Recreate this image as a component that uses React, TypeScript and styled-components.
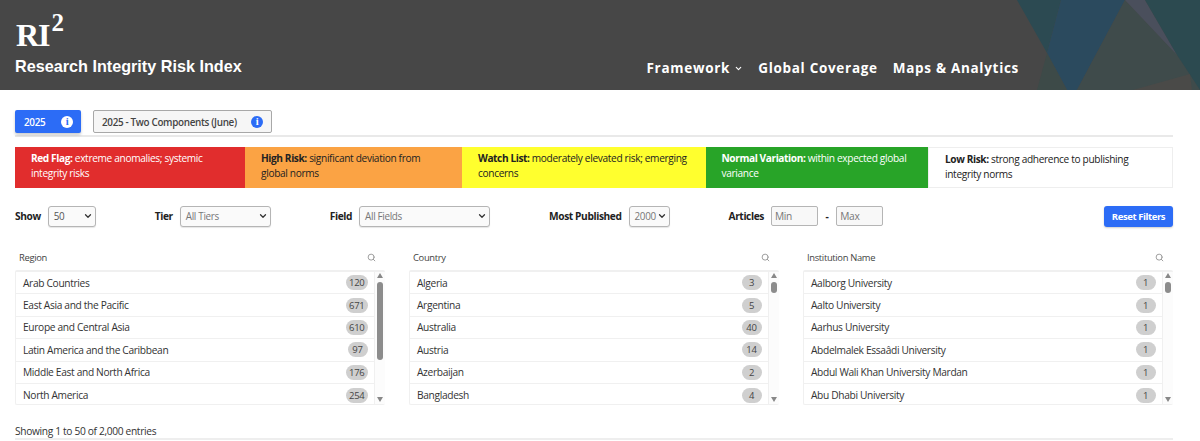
import React from "react";
import styled, { createGlobalStyle } from "styled-components";
import { ChevronDown, Search } from "lucide-react";

const GlobalStyle = createGlobalStyle`
  html, body { margin: 0; padding: 0; background: #fff; }
  body {
    font-family: "Open Sans", "Liberation Sans", sans-serif;
    color: #333;
    overflow: hidden;
  }
  * { box-sizing: border-box; }
`;

const Page = styled.div`
  width: 1200px;
  height: 441px;
  overflow: hidden;
`;

const Header = styled.header`
  position: relative;
  height: 90px;
  background: #474747;
  padding: 0 15px;
  display: flex;
  justify-content: space-between;
  overflow: hidden;
`;

const Decor = styled.svg`
  position: absolute;
  right: 0;
  top: 0;
`;

const Brand = styled.div`
  position: relative;
  color: #fff;
`;

const Logo = styled.div`
  font-family: "Liberation Serif", serif;
  font-weight: 700;
  font-size: 32px;
  letter-spacing: -1px;
  line-height: 38px;
  margin-top: 16px;
  height: 38px;
  padding-left: 1px;

  sup {
    font-size: 25px;
    line-height: 0;
    position: relative;
    top: -15px;
    vertical-align: baseline;
    margin-left: 2px;
  }
`;

const Tagline = styled.div`
  font-family: "Liberation Sans", sans-serif;
  font-weight: 700;
  font-size: 16.2px;
  line-height: 20px;
  margin-top: 2px;
`;

const Nav = styled.nav`
  position: relative;
  display: flex;
  gap: 15px;
  align-items: center;
  height: 28px;
  margin-top: 54px;
  margin-right: 166px;
`;

const NavItem = styled.a`
  display: inline-flex;
  align-items: center;
  gap: 4px;
  color: #fff;
  font-weight: 700;
  font-size: 13.5px;
  letter-spacing: 0.7px;
`;

const Content = styled.main`
  padding: 20px 27px 0 15px;
`;

const TabBar = styled.div`
  display: flex;
  gap: 12px;
  height: 27px;
  border-bottom: 2px solid #e9e9e9;
  align-items: flex-start;
`;

const Tab = styled.button<{ $active?: boolean }>`
  display: flex;
  align-items: center;
  justify-content: space-between;
  height: 23px;
  padding: 0 8px 0 ${(p) => (p.$active ? "9px" : "8px")};
  font-family: inherit;
  font-size: 9.9px;
  letter-spacing: -0.33px;
  font-weight: 600;
  border-radius: 2px;
  background: ${(p) => (p.$active ? "#2c6cf6" : "#f6f6f6")};
  color: ${(p) => (p.$active ? "#fff" : "#444")};
  border: ${(p) => (p.$active ? "none" : "1px solid #a8a8a8")};
  width: ${(p) => (p.$active ? "66px" : "179px")};
  box-shadow: ${(p) => (p.$active ? "0 2px 3px rgba(0,0,0,.2)" : "none")};
`;

const InfoDot = styled.span<{ $inverse?: boolean }>`
  width: 12px;
  height: 12px;
  border-radius: 50%;
  display: flex;
  align-items: center;
  justify-content: center;
  font-family: "Liberation Serif", serif;
  font-size: 10.5px;
  font-weight: 700;
  background: ${(p) => (p.$inverse ? "#fff" : "#2c6cf6")};
  color: ${(p) => (p.$inverse ? "#2c6cf6" : "#fff")};
`;

const RiskBar = styled.div`
  display: grid;
  grid-template-columns: 230px 217px 243.5px 222.5px 245px;
  height: 39px;
  margin-top: 9.5px;
`;

const RiskCell = styled.div<{ $bg: string; $fg: string; $outlined?: boolean }>`
  background: ${(p) => p.$bg};
  color: ${(p) => p.$fg};
  font-size: 10.15px;
  letter-spacing: -0.33px;
  line-height: 15.5px;
  padding: 4px 16px;
  border: ${(p) => (p.$outlined ? "1px solid #eee" : "none")};
  b { font-weight: 700; letter-spacing: -0.4px; }
`;

const Filters = styled.div`
  display: flex;
  align-items: center;
  height: 22px;
  margin-top: 19.5px;
`;

const FilterLabel = styled.label<{ $left: number }>`
  font-size: 10.2px;
  letter-spacing: -0.4px;
  font-weight: 700;
  color: #222;
  margin-left: ${(p) => p.$left}px;
  margin-right: 7px;
`;

const SelectBox = styled.div<{ $w: number; $dark?: boolean }>`
  width: ${(p) => p.$w}px;
  height: 21px;
  border: 1px solid #b5b5b5;
  border-radius: 3px;
  display: flex;
  align-items: center;
  justify-content: space-between;
  padding: 0 2px 0 5px;
  background: #fafafa;
  font-size: 9.9px;
  letter-spacing: -0.33px;
  color: ${(p) => (p.$dark ? "#555" : "#777")};
  box-shadow: 0 1px 1px rgba(0, 0, 0, 0.1);
`;

const NumInput = styled.div`
  width: 47px;
  height: 20px;
  border: 1px solid #b5b5b5;
  border-radius: 2px;
  background: #f8f8f8;
  font-size: 10.2px;
  letter-spacing: -0.33px;
  color: #777;
  padding: 0 3px;
  display: flex;
  align-items: center;
`;

const Dash = styled.span`
  font-size: 10.2px;
  font-weight: 700;
  margin: 0 7.5px;
  color: #222;
`;

const ResetButton = styled.button`
  margin-left: auto;
  width: 69px;
  height: 21px;
  background: #2c6cf6;
  border: none;
  border-radius: 3px;
  color: #fff;
  font-family: inherit;
  font-weight: 700;
  font-size: 9.5px;
  letter-spacing: -0.4px;
  padding: 0;
  box-shadow: 0 1px 2px rgba(0, 0, 0, 0.2);
`;

const Columns = styled.div`
  display: grid;
  grid-template-columns: repeat(3, 370px);
  gap: 24px;
  margin-top: 22px;
`;

const ColHead = styled.div`
  display: flex;
  justify-content: space-between;
  align-items: center;
  height: 16px;
  padding: 0 9px 0 4px;
  font-size: 9.4px;
  letter-spacing: -0.33px;
  color: #444;
  svg { color: #999; }
`;

const ListPanel = styled.div`
  display: flex;
  height: 135px;
  margin-top: 5px;
  border: 1px solid #f0f0f0;
  border-top-width: 2px;
  border-right: none;
  border-radius: 2px;
  overflow: hidden;
`;

const Rows = styled.div`
  flex: 1;
  min-width: 0;
  border-right: 1px solid #f0f0f0;
`;

const Row = styled.div`
  display: flex;
  align-items: center;
  justify-content: space-between;
  height: 22.4px;
  padding: 0 6.5px 0 7px;
  border-bottom: 1px solid #f0f0f0;
  font-size: 10.2px;
  letter-spacing: -0.33px;
  color: #333;
  &:last-child { border-bottom: none; }
`;

const Count = styled.span`
  min-width: 20px;
  height: 15px;
  padding: 0 3px;
  background: #cfcfcf;
  border-radius: 8px;
  font-size: 9.5px;
  letter-spacing: -0.3px;
  color: #444;
  display: flex;
  align-items: center;
  justify-content: center;
`;

const ScrollTrack = styled.div`
  width: 10px;
  flex: none;
  display: flex;
  flex-direction: column;
  align-items: center;
  background: #fcfcfc;
  padding: 1px 0 2px;
`;

const Arrow = styled.span<{ $down?: boolean }>`
  flex: none;
  width: 0;
  height: 0;
  border-left: 3px solid transparent;
  border-right: 3px solid transparent;
  ${(p) =>
    p.$down
      ? "border-top: 5px solid #888; margin-top: auto;"
      : "border-bottom: 5px solid #888;"}
`;

const Thumb = styled.span`
  width: 6px;
  margin-top: 4px;
  border-radius: 3px;
  background: #8c8c8c;
`;

const Footer = styled.div`
  margin-top: 19px;
  font-size: 10.2px;
  letter-spacing: -0.33px;
  line-height: 14px;
  color: #333;
`;

const FooterRule = styled.div`
  height: 2px;
  background: #eee;
`;

type Item = [string, number];

const panels: { title: string; thumb: number; items: Item[] }[] = [
  {
    title: "Region",
    thumb: 78,
    items: [
      ["Arab Countries", 120],
      ["East Asia and the Pacific", 671],
      ["Europe and Central Asia", 610],
      ["Latin America and the Caribbean", 97],
      ["Middle East and North Africa", 176],
      ["North America", 254],
    ],
  },
  {
    title: "Country",
    thumb: 11,
    items: [
      ["Algeria", 3],
      ["Argentina", 5],
      ["Australia", 40],
      ["Austria", 14],
      ["Azerbaijan", 2],
      ["Bangladesh", 4],
    ],
  },
  {
    title: "Institution Name",
    thumb: 11,
    items: [
      ["Aalborg University", 1],
      ["Aalto University", 1],
      ["Aarhus University", 1],
      ["Abdelmalek Essaâdi University", 1],
      ["Abdul Wali Khan University Mardan", 1],
      ["Abu Dhabi University", 1],
    ],
  },
];

const App = () => {
  return (
    <Page>
      <GlobalStyle />
      <Header>
        <Decor width="220" height="90" viewBox="0 0 220 90">
          <polygon points="37,0 81,0 67,53" fill="#2c4a52" />
          <polygon points="81,0 145,0 97,90 87,90 67,53" fill="#2b4a5e" />
          <polygon points="145,0 197,55 220,90 97,90" fill="#3f4b4b" />
          <polygon points="67,53 87,90 57,90" fill="#3d4a48" />
          <polygon points="145,0 165,0 197,55" fill="#4a4f5c" />
          <polygon points="165,0 220,0 220,90 197,55" fill="#2c4a50" />
          <polygon points="153,90 210,74 212,90" fill="#4a4a48" />
        </Decor>
        <Brand>
          <Logo>
            RI<sup>2</sup>
          </Logo>
          <Tagline>Research Integrity Risk Index</Tagline>
        </Brand>
        <Nav>
          <NavItem>
            Framework <ChevronDown size={9} strokeWidth={3} />
          </NavItem>
          <NavItem>Global Coverage</NavItem>
          <NavItem>Maps &amp; Analytics</NavItem>
        </Nav>
      </Header>
      <Content>
        <TabBar>
          <Tab $active>
            2025 <InfoDot $inverse>i</InfoDot>
          </Tab>
          <Tab>
            2025 - Two Components (June) <InfoDot>i</InfoDot>
          </Tab>
        </TabBar>
        <RiskBar>
          <RiskCell $bg="#e12d2d" $fg="#fff">
            <b>Red Flag:</b> extreme anomalies; systemic integrity risks
          </RiskCell>
          <RiskCell $bg="#fba344" $fg="#222">
            <b>High Risk:</b> significant deviation from global norms
          </RiskCell>
          <RiskCell $bg="#ffff2e" $fg="#222">
            <b>Watch List:</b> moderately elevated risk; emerging concerns
          </RiskCell>
          <RiskCell $bg="#28a428" $fg="#fff">
            <b>Normal Variation:</b> within expected global variance
          </RiskCell>
          <RiskCell $bg="#fff" $fg="#222" $outlined>
            <b>Low Risk:</b> strong adherence to publishing integrity norms
          </RiskCell>
        </RiskBar>
        <Filters>
          <FilterLabel $left={0}>Show</FilterLabel>
          <SelectBox $w={48} $dark>
            50 <ChevronDown size={10} strokeWidth={3} color="#333" />
          </SelectBox>
          <FilterLabel $left={59}>Tier</FilterLabel>
          <SelectBox $w={91}>
            All Tiers <ChevronDown size={10} strokeWidth={3} color="#333" />
          </SelectBox>
          <FilterLabel $left={59}>Field</FilterLabel>
          <SelectBox $w={131}>
            All Fields <ChevronDown size={10} strokeWidth={3} color="#333" />
          </SelectBox>
          <FilterLabel $left={59}>Most Published</FilterLabel>
          <SelectBox $w={41}>
            2000 <ChevronDown size={10} strokeWidth={3} color="#333" />
          </SelectBox>
          <FilterLabel $left={59}>Articles</FilterLabel>
          <NumInput>Min</NumInput>
          <Dash>-</Dash>
          <NumInput>Max</NumInput>
          <ResetButton>Reset Filters</ResetButton>
        </Filters>
        <Columns>
          {panels.map((panel) => (
            <div key={panel.title}>
              <ColHead>
                {panel.title}
                <Search size={9} strokeWidth={2.5} />
              </ColHead>
              <ListPanel>
                <Rows>
                  {panel.items.map(([name, count]) => (
                    <Row key={name}>
                      {name}
                      <Count>{count}</Count>
                    </Row>
                  ))}
                </Rows>
                <ScrollTrack>
                  <Arrow />
                  <Thumb style={{ height: panel.thumb }} />
                  <Arrow $down />
                </ScrollTrack>
              </ListPanel>
            </div>
          ))}
        </Columns>
        <Footer>Showing 1 to 50 of 2,000 entries</Footer>
        <FooterRule />
      </Content>
    </Page>
  );
};

export default App;
